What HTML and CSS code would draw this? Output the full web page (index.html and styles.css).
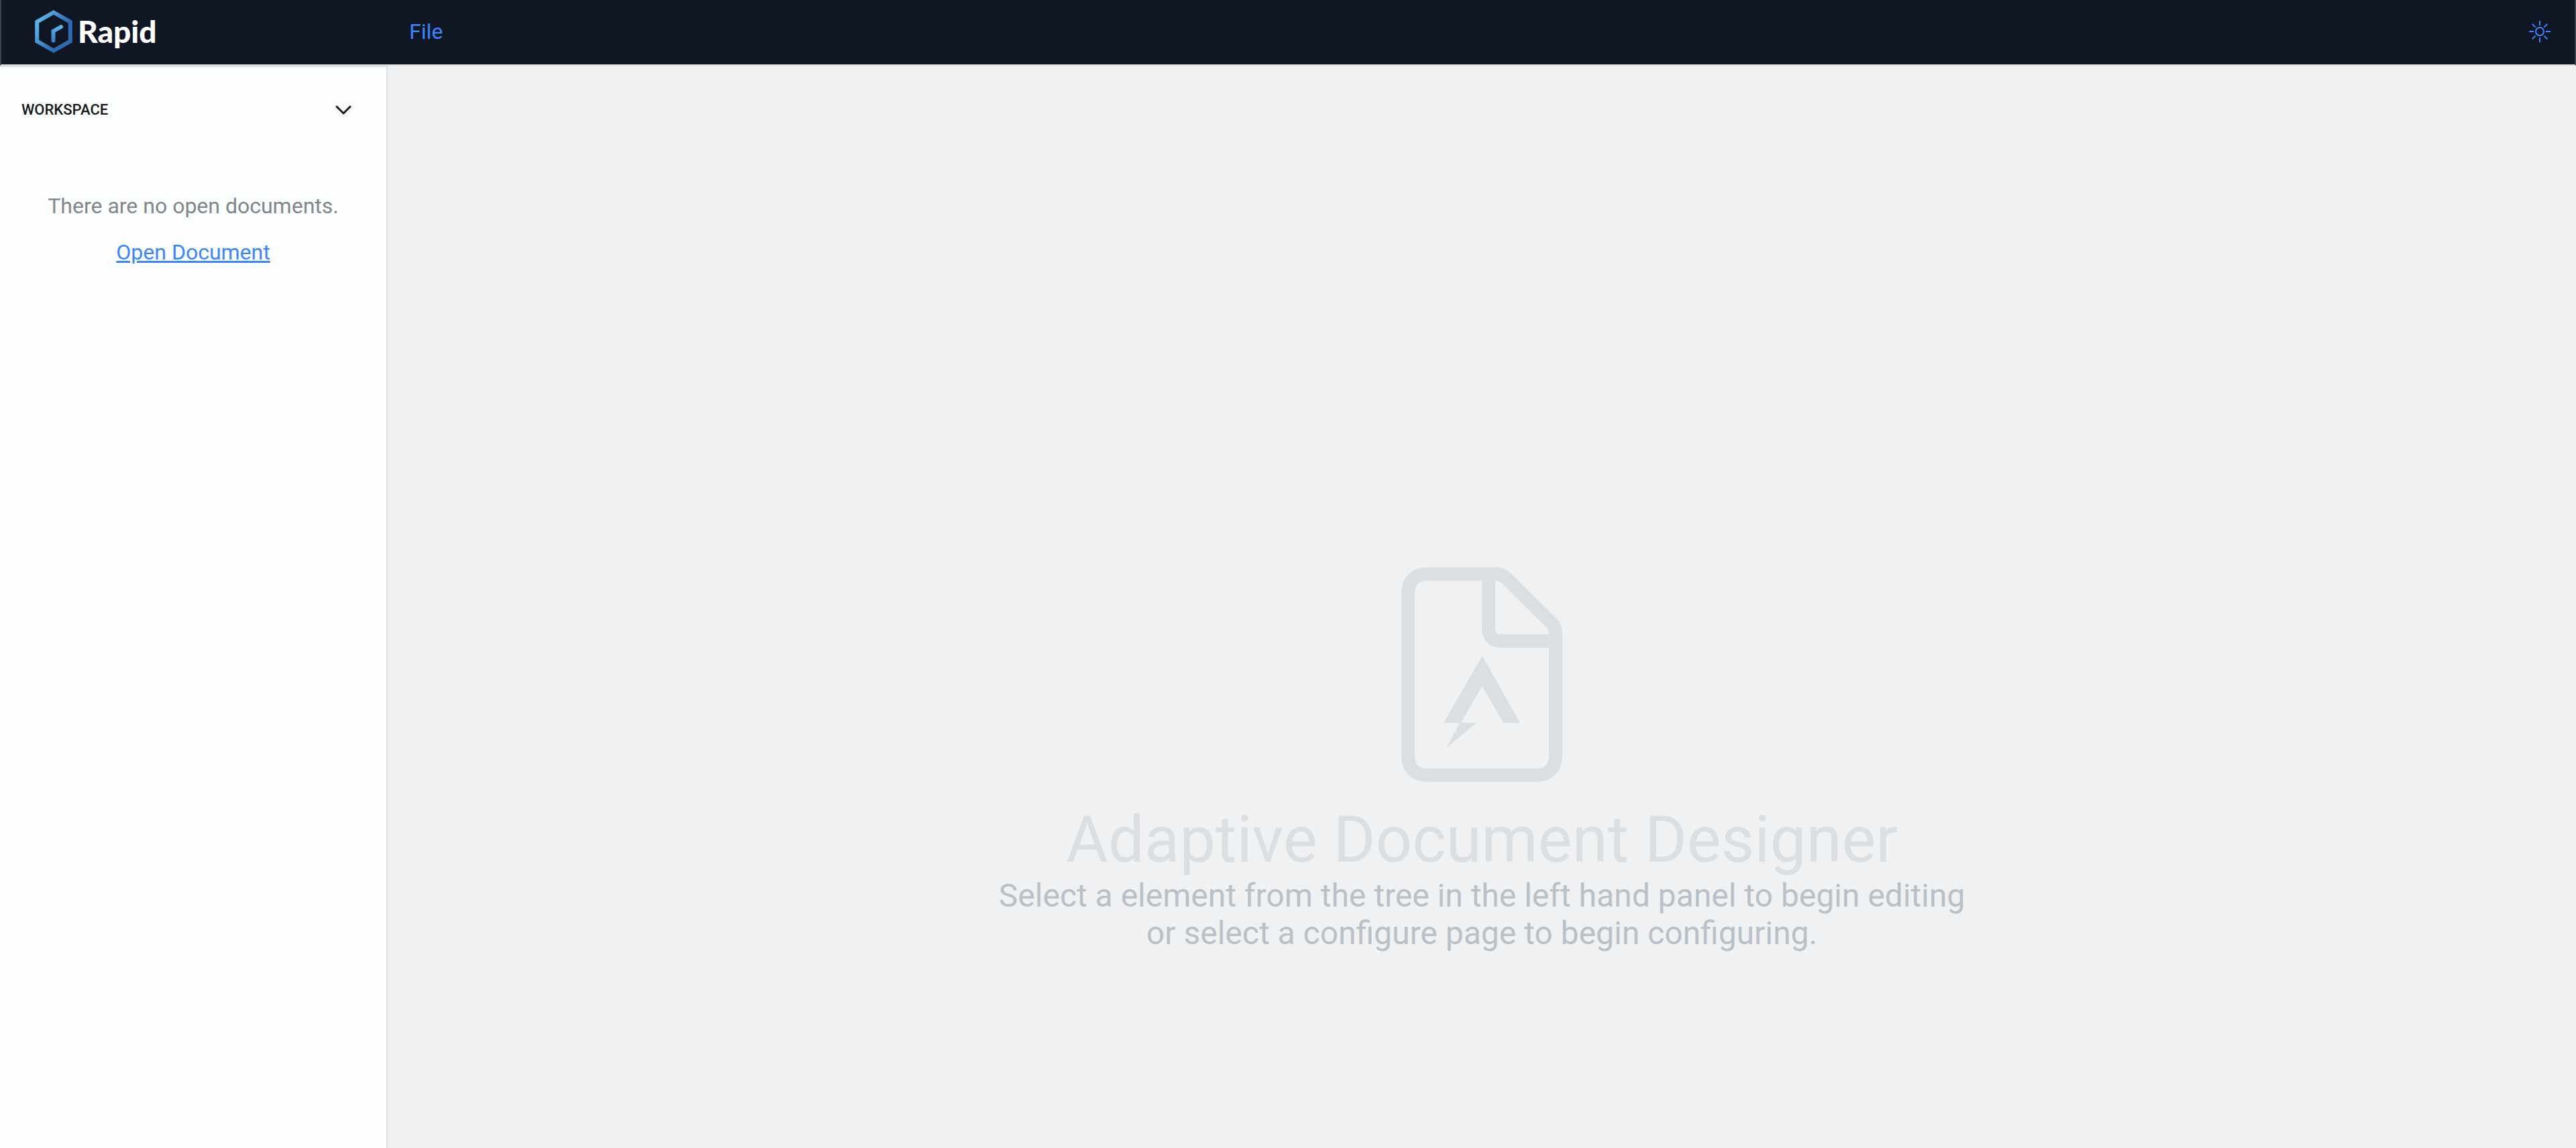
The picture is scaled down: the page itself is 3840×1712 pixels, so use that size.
FILE: index.html
```
<!DOCTYPE html>
<html lang="en">
<head>
<meta charset="utf-8">
<meta name="viewport" content="width=device-width, initial-scale=1">
<title>Rapid</title>
<link rel="stylesheet" href="styles.css">
</head>
<body>
<div class="app">
  <header class="topbar">
    <a class="brand" href="#">
      <svg class="brand-mark" viewBox="0 0 56 64" aria-hidden="true">
        <defs>
          <linearGradient id="edge" gradientUnits="userSpaceOnUse" x1="4" y1="22" x2="36" y2="42">
            <stop offset="0" stop-color="#58b0e3"/>
            <stop offset="1" stop-color="#2f69b3"/>
          </linearGradient>
          <linearGradient id="hand" gradientUnits="userSpaceOnUse" x1="32" y1="24" x2="29" y2="48">
            <stop offset="0" stop-color="#58b0e3"/>
            <stop offset="1" stop-color="#3b7fc4"/>
          </linearGradient>
        </defs>
        <path d="M28 3.5 52.8 17.6V46.4L28 60.5 3.2 46.4V17.6Z" fill="none" stroke="url(#edge)" stroke-width="6"/>
        <path d="M27.5 45.5V31.5L39 25" fill="none" stroke="url(#hand)" stroke-width="6" stroke-linecap="round"/>
      </svg>
      <span class="brand-name">Rapid</span>
    </a>
    <nav class="menu">
      <button class="menu-item" type="button">File</button>
    </nav>
    <button class="theme-toggle" type="button" aria-label="Toggle theme">
      <svg class="theme-icon" viewBox="0 0 32 32" aria-hidden="true">
        <circle cx="16" cy="16" r="6"/>
        <path d="M16 0v7M16 25v7M0 16h7M25 16h7M4.700 4.700l4.900 4.900M22.400 22.400l4.900 4.900M4.700 27.300l4.900-4.900M22.400 9.600l4.900-4.900"/>
      </svg>
    </button>
  </header>
  <aside class="sidebar">
    <button class="section-toggle" type="button" aria-expanded="true">
      <span>WORKSPACE</span>
      <svg class="chevron" viewBox="0 0 24 16" aria-hidden="true"><path d="M2 3 12 13 22 3"/></svg>
    </button>
    <div class="empty">
      <p class="empty-text">There are no open documents.</p>
      <a class="empty-link" href="#">Open Document</a>
    </div>
  </aside>
  <main class="canvas">
    <svg class="doc-icon" viewBox="0 0 240 320" aria-hidden="true">
      <path class="doc-line" d="M40 10H141Q149 10 155 15L224 83Q230 89 230 100V280Q230 310 200 310H40Q10 310 10 280V40Q10 10 40 10Z"/>
      <path class="doc-line" d="M130 12V91Q130 110 149 110H228"/>
      <path class="doc-fill" d="M120.500 132 177 232H152L120.500 177 89 231.500H112.500L67.500 269 87 232H63Z"/>
    </svg>
    <h1 class="title">Adaptive Document Designer</h1>
    <p class="hint">Select a element from the tree in the left hand panel to begin editing<br>or select a configure page to begin configuring.</p>
  </main>
</div>
</body>
</html>
```
FILE: styles.css
```
* {
  box-sizing: border-box;
}

body {
  margin: 0;
  font-family: Roboto, "Liberation Sans", sans-serif;
  font-size: 32px;
  line-height: 48px;
}

button {
  padding: 0;
  border: 0;
  background: none;
  font: inherit;
  cursor: pointer;
}

.app {
  display: grid;
  grid-template-columns: 578px 1fr;
  grid-template-rows: auto 1fr;
  min-height: 100vh;
}

.topbar {
  grid-column: 1 / -1;
  display: flex;
  align-items: center;
  height: 98px;
  padding: 0 36px 2px 50px;
  background: #101623;
  background-clip: padding-box;
  border: 2px solid #3d414c;
  border-top: 0;
  border-bottom-color: #dbdee1;
}

.brand {
  display: flex;
  align-items: center;
  gap: 8px;
  width: 558px;
  color: #fff;
  text-decoration: none;
}

.brand-mark {
  width: 56px;
  height: 64px;
}

.brand-name {
  font-family: Lato, sans-serif;
  font-size: 46px;
  font-weight: 900;
}

.menu {
  flex: 1;
}

.menu-item {
  color: #3b86ff;
}

.theme-toggle {
  display: flex;
}

.theme-icon {
  width: 32px;
  height: 32px;
  fill: none;
  stroke: #3b86ff;
  stroke-width: 2;
}

.sidebar {
  background: #fcfefd;
  border-top: 2px solid #dbdee1;
  border-right: 2px solid #dbdee1;
}

.section-toggle {
  display: flex;
  align-items: center;
  justify-content: space-between;
  width: 100%;
  height: 128px;
  padding: 0 52px 0 32px;
  color: #15181c;
  font-size: 22px;
  font-weight: 500;
}

.chevron {
  width: 24px;
  height: 16px;
  fill: none;
  stroke: #15181c;
  stroke-width: 3;
  stroke-linecap: round;
  stroke-linejoin: round;
}

.empty {
  display: flex;
  flex-direction: column;
  align-items: center;
  gap: 21px;
  padding-top: 55px;
}

.empty-text {
  margin: 0;
  color: #80868d;
}

.empty-link {
  color: #3b86ff;
}

.canvas {
  display: flex;
  flex-direction: column;
  align-items: center;
  justify-content: center;
  padding-top: 456px;
  background: #eff1f3;
  text-align: center;
}

.doc-icon {
  width: 240px;
  height: 320px;
}

.doc-line {
  fill: none;
  stroke: #dbdfe1;
  stroke-width: 20;
}

.doc-fill {
  fill: #dbdfe1;
}

.title {
  margin: 30px 0 0;
  color: #dbdfe1;
  font-size: 96px;
  font-weight: 400;
  line-height: 112px;
}

.hint {
  margin: 0;
  color: #b9c0c7;
  font-size: 48px;
  line-height: 56px;
}
```
